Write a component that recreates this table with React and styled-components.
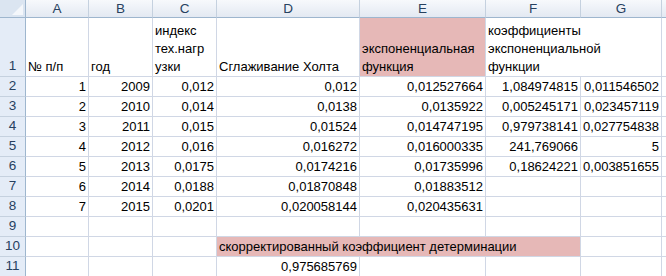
import { Fragment } from "react";
import styled, { createGlobalStyle } from "styled-components";

const GlobalStyle = createGlobalStyle`
    body {
        margin: 0;
        background: #fff;
        overflow: hidden;
    }
`

const Sheet = styled.div`
    display: grid;
    grid-template-columns: 26px 63px 64px 64px 143px 126px 95px 81px 1fr;
    grid-template-rows: 18px 59px repeat(10, 20px);
    width: 666px;
    height: 276px;
    overflow: hidden;
    font-family: "Liberation Sans", Arial, sans-serif;
    font-size: 13px;
    color: #000;
`

const Corner = styled.div`
    position: relative;
    background: #dbe5f1;
    border-right: 1px solid #9eb6ce;
    border-bottom: 1px solid #9eb6ce;

    &::after {
        content: "";
        position: absolute;
        right: 2px;
        bottom: 2px;
        width: 0;
        height: 0;
        border-left: 11px solid transparent;
        border-bottom: 11px solid #f4f7fb;
    }
`

const ColHead = styled.div`
    display: flex;
    align-items: center;
    justify-content: center;
    background: linear-gradient(#f7f9fc, #e3e9f2);
    border-right: 1px solid #c5d1df;
    border-bottom: 1px solid #9eb6ce;
    color: #27415f;
    font-size: 13.5px;
`

const RowHead = styled.div`
    display: flex;
    align-items: flex-end;
    justify-content: center;
    padding-bottom: 1px;
    background: #e4ecf7;
    border-right: 1px solid #9eb6ce;
    border-bottom: 1px solid #c5d1df;
    color: #27415f;
    font-size: 13.5px;
    line-height: 18px;
`

const Cell = styled.div`
    grid-column: span ${props => props.span || 1};
    display: flex;
    flex-direction: column;
    justify-content: flex-end;
    align-items: ${props => props.num ? 'flex-end' : 'flex-start'};
    padding: 0 2px 0 2px;
    background: ${props => props.fill || '#fff'};
    border-right: 1px solid #d0d7e5;
    border-bottom: 1px solid #d0d7e5;
    line-height: 18px;
    white-space: nowrap;
    overflow: visible;
`

const pink = '#e6b8b7';
const cols = ['A', 'B', 'C', 'D', 'E', 'F', 'G', ''];

const data = [
    ['1', '2009', '0,012', '0,012', '0,012527664', '1,084974815', '0,011546502'],
    ['2', '2010', '0,014', '0,0138', '0,0135922', '0,005245171', '0,023457119'],
    ['3', '2011', '0,015', '0,01524', '0,014747195', '0,979738141', '0,027754838'],
    ['4', '2012', '0,016', '0,016272', '0,016000335', '241,769066', '5'],
    ['5', '2013', '0,0175', '0,0174216', '0,01735996', '0,18624221', '0,003851655'],
    ['6', '2014', '0,0188', '0,01870848', '0,01883512', '', ''],
    ['7', '2015', '0,0201', '0,020058144', '0,020435631', '', ''],
];

function Lines({ items }) {
    return items.map((t, i) => <span key={i}>{t}</span>);
}

export default function App() {
    return (
        <>
            <GlobalStyle />
            <Sheet>
                <Corner />
                {cols.map((c, i) => <ColHead key={i}>{c}</ColHead>)}

                <RowHead>1</RowHead>
                <Cell>№ п/п</Cell>
                <Cell>год</Cell>
                <Cell><Lines items={['индекс', 'тех.нагр', 'узки']} /></Cell>
                <Cell>Сглаживание Холта</Cell>
                <Cell fill={pink}><Lines items={['экспоненциальная', 'функция']} /></Cell>
                <Cell span={2}><Lines items={['коэффициенты', 'экспоненциальной', 'функции']} /></Cell>
                <Cell />

                {data.map((row, r) => (
                    <Fragment key={r}>
                        <RowHead>{r + 2}</RowHead>
                        {row.map((v, c) => <Cell key={c} num>{v}</Cell>)}
                        <Cell />
                    </Fragment>
                ))}

                <RowHead>9</RowHead>
                {cols.map((c, i) => <Cell key={'r9' + i} />)}

                <RowHead>10</RowHead>
                <Cell />
                <Cell />
                <Cell />
                <Cell span={3} fill={pink}>скорректированный коэффициент детерминации</Cell>
                <Cell />
                <Cell />

                <RowHead>11</RowHead>
                <Cell />
                <Cell />
                <Cell />
                <Cell num>0,975685769</Cell>
                <Cell />
                <Cell />
                <Cell />
                <Cell />
            </Sheet>
        </>
    );
}
